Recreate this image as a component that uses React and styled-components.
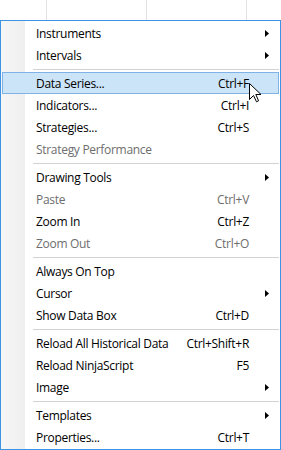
import styled, { createGlobalStyle } from "styled-components";

const GlobalStyle = createGlobalStyle`
  html, body {
    margin: 0;
    padding: 0;
    background: #ffffff;
  }
  body {
    font-family: "Segoe UI", "Open Sans", "Noto Sans", sans-serif;
    font-size: 12px;
  }
`;

const items = [
  { label: "Instruments", submenu: true },
  { label: "Intervals", submenu: true },
  { sep: true },
  { label: "Data Series...", shortcut: "Ctrl+F", active: true },
  { label: "Indicators...", shortcut: "Ctrl+I" },
  { label: "Strategies...", shortcut: "Ctrl+S" },
  { label: "Strategy Performance", disabled: true },
  { sep: true },
  { label: "Drawing Tools", submenu: true },
  { label: "Paste", shortcut: "Ctrl+V", disabled: true },
  { label: "Zoom In", shortcut: "Ctrl+Z" },
  { label: "Zoom Out", shortcut: "Ctrl+O", disabled: true },
  { sep: true },
  { label: "Always On Top" },
  { label: "Cursor", submenu: true },
  { label: "Show Data Box", shortcut: "Ctrl+D" },
  { sep: true },
  { label: "Reload All Historical Data", shortcut: "Ctrl+Shift+R" },
  { label: "Reload NinjaScript", shortcut: "F5" },
  { label: "Image", submenu: true },
  { sep: true },
  { label: "Templates", submenu: true },
  { label: "Properties...", shortcut: "Ctrl+T" },
];

const Arrow = () => (
  <svg width="4" height="7" viewBox="0 0 4 7">
    <path d="M0 0 L4 3.5 L0 7 Z" fill="#000" />
  </svg>
);

const Pointer = () => (
  <svg width="13" height="20" viewBox="0 0 13 20">
    <path
      d="M0.5 0.5 L0.5 16.5 L4.5 12.5 L7.5 18.8 L9.6 17.8 L6.8 11.5 L12 11.5 Z"
      fill="#ffffff"
      stroke="#000000"
      strokeWidth="1"
      strokeLinejoin="miter"
    />
  </svg>
);

const App = () => {
  return (
    <Page>
      <GlobalStyle />
      <ChartStrip />
      <Menu>
        {items.map((it, i) =>
          it.sep ? (
            <Separator key={i} />
          ) : (
            <Item key={i} $active={it.active} $disabled={it.disabled}>
              <Label>{it.label}</Label>
              <Shortcut>{it.shortcut}</Shortcut>
              <ArrowCell>{it.submenu && <Arrow />}</ArrowCell>
            </Item>
          )
        )}
      </Menu>
      <CursorWrap>
        <Pointer />
      </CursorWrap>
    </Page>
  );
};

const Page = styled.div`
  position: relative;
  width: 281px;
  height: 450px;
  background: #ffffff;
  overflow: hidden;
`;

const ChartStrip = styled.div`
  height: 20px;
  background-image: linear-gradient(to right, #e2e2e2 1px, transparent 1px);
  background-size: 100px 100%;
  background-position: 46px 0;
`;

const Menu = styled.div`
  box-sizing: border-box;
  width: 281px;
  padding: 1px 0;
  border: 1px solid #3d94e4;
  background: linear-gradient(
    to right,
    #f6f6f6 0,
    #efefef 24px,
    #ffffff 24px
  );
  display: flex;
  flex-direction: column;
`;

const Item = styled.div`
  box-sizing: border-box;
  height: 22px;
  margin: 0 1px;
  padding-left: 33px;
  display: flex;
  align-items: center;
  border: 1px solid ${(p) => (p.$active ? "#7fb2e6" : "transparent")};
  background: ${(p) => (p.$active ? "#cce4f7" : "transparent")};
  color: ${(p) => (p.$disabled ? "#6d6d6d" : "#000000")};
  letter-spacing: -0.3px;
  white-space: nowrap;
`;

const Label = styled.span`
  flex: 1;
`;

const Shortcut = styled.span`
  text-align: right;
`;

const ArrowCell = styled.span`
  width: 29px;
  height: 100%;
  display: flex;
  align-items: center;
  padding-left: 16px;
  box-sizing: border-box;
`;

const Separator = styled.div`
  height: 1px;
  margin: 3px 1px 2px 32px;
  background: #d3d3d3;
`;

const CursorWrap = styled.div`
  position: absolute;
  left: 249px;
  top: 83px;
  width: 13px;
  height: 20px;
`;

export default App;
